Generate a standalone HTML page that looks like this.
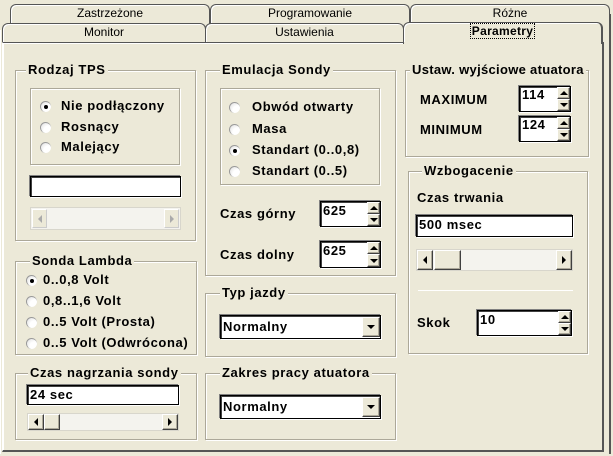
<!DOCTYPE html><html><head><meta charset="utf-8"><style>
*{box-sizing:border-box}
body{margin:0;width:613px;height:456px;background:#ECE9D8;position:relative;overflow:hidden;font-family:"Liberation Sans",sans-serif;font-size:13px;font-weight:bold;color:#000;letter-spacing:0.6px}
.a{position:absolute;white-space:nowrap}
.tab{position:absolute;border:1px solid #555;border-bottom:none;border-radius:6px 6px 0 0;background:#ECE9D8;text-align:center;font-weight:normal;font-size:12px;line-height:16px;box-shadow:inset 1px 1px 0 #fff;letter-spacing:0}
.g{position:absolute;border:1px solid #ACA899;box-shadow:1px 1px 0 #fff,inset 1px 1px 0 #fff}
.gt{position:absolute;top:-9px;left:12px;background:#ECE9D8;padding:0 2px;line-height:16px;font-size:13px;white-space:nowrap}
.f{position:absolute;background:#fff;border:1px solid #000;box-shadow:inset 1px 1px 0 #404040, 1px 1px 0 #fff,-1px -1px 0 #808080;line-height:18px;padding-left:2px}
.r{position:absolute;width:11px;height:11px;border-radius:50%;background:radial-gradient(circle at 70% 70%,#fff 40%,#ddd);border-top:1px solid #999;border-left:1px solid #999}
.r.on::after{content:"";position:absolute;left:3px;top:3px;width:4px;height:4px;border-radius:50%;background:#000}
.sb{position:absolute;background:#F4F3EE;border:1px solid #d8d6cc}
.btn{position:absolute;background:#ECE9D8;border:1px solid;border-color:#fff #404040 #404040 #fff;box-shadow:inset -1px -1px 0 #aca899}
.ar{position:absolute;left:50%;top:50%;width:0;height:0;transform:translate(-50%,-50%)}
.up{border-left:4px solid transparent;border-right:4px solid transparent;border-bottom:4px solid #000}
.dn{border-left:4px solid transparent;border-right:4px solid transparent;border-top:4px solid #000}
.lf{border-top:4px solid transparent;border-bottom:4px solid transparent;border-right:4px solid #000}
.rt{border-top:4px solid transparent;border-bottom:4px solid transparent;border-left:4px solid #000}
.dis .lf{border-right-color:#aaa}.dis .rt{border-left-color:#aaa}
</style></head><body>
<div class="tab" style="left:10px;top:4px;width:200px;height:20px">Zastrzeżone</div>
<div class="tab" style="left:210px;top:4px;width:200px;height:20px">Programowanie</div>
<div class="tab" style="left:410px;top:4px;width:200px;height:20px">Różne</div>
<div class="tab" style="left:2px;top:23px;width:204px;height:20px">Monitor</div>
<div class="tab" style="left:205px;top:23px;width:199px;height:20px">Ustawienia</div>
<div class="a" style="left:2px;top:42px;width:602px;height:410px;border-left:1px solid #fff;border-top:1px solid #555;border-right:2px solid #555;border-bottom:2px solid #555;background:#ECE9D8;box-shadow:inset 1px 1px 0 #fff"></div>
<div class="tab" style="left:403px;top:22px;width:200px;height:22px;border-color:#555;border-right-width:2px;z-index:2"><span style="font-weight:bold;border:1px dotted #000;padding:0 1px;letter-spacing:0.3px">Parametry</span></div>
<div class="a" style="left:404px;top:42px;width:197px;height:3px;background:#ECE9D8;z-index:3"></div>
<div class="a" style="left:609px;top:14px;width:2px;height:440px;background:#555"></div>
<div class="a" style="left:0px;top:30px;width:1px;height:424px;background:#fff"></div>

<div class="g" style="left:15px;top:70px;width:181px;height:171px"><div class="gt" style="left:10px">Rodzaj TPS</div></div>
<div class="g" style="left:30px;top:88px;width:150px;height:77px"></div>
<div class="r on" style="left:40px;top:101px"></div><div class="a" style="left:61px;top:98px">Nie podłączony</div>
<div class="r" style="left:40px;top:122px"></div><div class="a" style="left:61px;top:119px">Rosnący</div>
<div class="r" style="left:40px;top:142px"></div><div class="a" style="left:61px;top:139px">Malejący</div>
<div class="f" style="left:30px;top:176px;width:151px;height:21px"></div>
<div class="sb dis" style="left:30px;top:207px;width:151px;height:23px"><div class="btn" style="left:1px;top:1px;width:15px;height:19px;border-color:#fff #ccc #ccc #fff;box-shadow:none"><div class="ar lf"></div></div><div class="btn" style="right:1px;top:1px;width:15px;height:19px;border-color:#fff #ccc #ccc #fff;box-shadow:none"><div class="ar rt"></div></div></div>

<div class="g" style="left:15px;top:261px;width:182px;height:94px"><div class="gt" style="left:14px">Sonda Lambda</div></div>
<div class="r on" style="left:26px;top:275px"></div><div class="a" style="left:43px;top:272px">0..0,8 Volt</div>
<div class="r" style="left:26px;top:296px"></div><div class="a" style="left:43px;top:293px">0,8..1,6 Volt</div>
<div class="r" style="left:26px;top:317px"></div><div class="a" style="left:43px;top:314px">0..5 Volt (Prosta)</div>
<div class="r" style="left:26px;top:338px"></div><div class="a" style="left:43px;top:335px">0..5 Volt (Odwrócona)</div>

<div class="g" style="left:15px;top:373px;width:182px;height:67px"><div class="gt" style="left:12px">Czas nagrzania sondy</div></div>
<div class="f" style="left:27px;top:385px;width:152px;height:20px">24 sec</div>
<div class="sb" style="left:27px;top:413px;width:152px;height:18px"><div class="btn" style="left:0;top:0;width:16px;height:16px"><div class="ar lf"></div></div><div class="btn" style="left:16px;top:0;width:16px;height:16px"></div><div class="btn" style="right:0;top:0;width:16px;height:16px"><div class="ar rt"></div></div></div>

<div class="g" style="left:205px;top:70px;width:191px;height:206px"><div class="gt" style="left:14px">Emulacja Sondy</div></div>
<div class="g" style="left:220px;top:88px;width:160px;height:97px"></div>
<div class="r" style="left:229px;top:102px"></div><div class="a" style="left:252px;top:99px">Obwód otwarty</div>
<div class="r" style="left:229px;top:124px"></div><div class="a" style="left:252px;top:121px">Masa</div>
<div class="r on" style="left:229px;top:145px"></div><div class="a" style="left:252px;top:142px">Standart (0..0,8)</div>
<div class="r" style="left:229px;top:166px"></div><div class="a" style="left:252px;top:163px">Standart (0..5)</div>
<div class="a" style="left:220px;top:206px">Czas górny</div>
<div class="f" style="left:320px;top:201px;width:61px;height:26px">625<div class="btn" style="right:0;top:0;width:13px;height:12px"><div class="ar up"></div></div><div class="btn" style="right:0;top:12px;width:13px;height:12px"><div class="ar dn"></div></div></div>
<div class="a" style="left:220px;top:247px">Czas dolny</div>
<div class="f" style="left:320px;top:241px;width:61px;height:27px">625<div class="btn" style="right:0;top:0;width:13px;height:12px"><div class="ar up"></div></div><div class="btn" style="right:0;top:12px;width:13px;height:13px"><div class="ar dn"></div></div></div>

<div class="g" style="left:205px;top:293px;width:191px;height:64px"><div class="gt" style="left:14px">Typ jazdy</div></div>
<div class="f" style="left:220px;top:315px;width:161px;height:24px;line-height:22px">Normalny<div class="btn" style="right:0;top:1px;width:18px;height:20px"><div class="ar dn"></div></div></div>
<div class="g" style="left:205px;top:373px;width:191px;height:67px"><div class="gt" style="left:14px">Zakres pracy atuatora</div></div>
<div class="f" style="left:220px;top:395px;width:161px;height:24px;line-height:22px">Normalny<div class="btn" style="right:0;top:1px;width:18px;height:20px"><div class="ar dn"></div></div></div>

<div class="g" style="left:405px;top:70px;width:184px;height:87px"><div class="gt" style="left:4px;letter-spacing:0.3px">Ustaw. wyjściowe atuatora</div></div>
<div class="a" style="left:420px;top:92px">MAXIMUM</div>
<div class="f" style="left:519px;top:86px;width:52px;height:26px;line-height:16px">114<div class="btn" style="right:0;top:0;width:13px;height:12px"><div class="ar up"></div></div><div class="btn" style="right:0;top:12px;width:13px;height:12px"><div class="ar dn"></div></div></div>
<div class="a" style="left:420px;top:122px">MINIMUM</div>
<div class="f" style="left:519px;top:116px;width:52px;height:26px;line-height:16px">124<div class="btn" style="right:0;top:0;width:13px;height:12px"><div class="ar up"></div></div><div class="btn" style="right:0;top:12px;width:13px;height:12px"><div class="ar dn"></div></div></div>

<div class="g" style="left:408px;top:171px;width:180px;height:183px"><div class="gt" style="left:13px">Wzbogacenie</div></div>
<div class="a" style="left:417px;top:190px">Czas trwania</div>
<div class="f" style="left:416px;top:215px;width:157px;height:22px">500 msec</div>
<div class="sb" style="left:416px;top:249px;width:157px;height:22px"><div class="btn" style="left:0;top:0;width:16px;height:20px"><div class="ar lf"></div></div><div class="btn" style="left:17px;top:0;width:27px;height:20px"></div><div class="btn" style="right:0;top:0;width:16px;height:20px"><div class="ar rt"></div></div></div>
<div class="a" style="left:418px;top:290px;width:155px;height:1px;background:#fff"></div>
<div class="a" style="left:417px;top:315px">Skok</div>
<div class="f" style="left:477px;top:310px;width:95px;height:26px;line-height:18px">10<div class="btn" style="right:0;top:0;width:13px;height:12px"><div class="ar up"></div></div><div class="btn" style="right:0;top:12px;width:13px;height:12px"><div class="ar dn"></div></div></div>
</body></html>
